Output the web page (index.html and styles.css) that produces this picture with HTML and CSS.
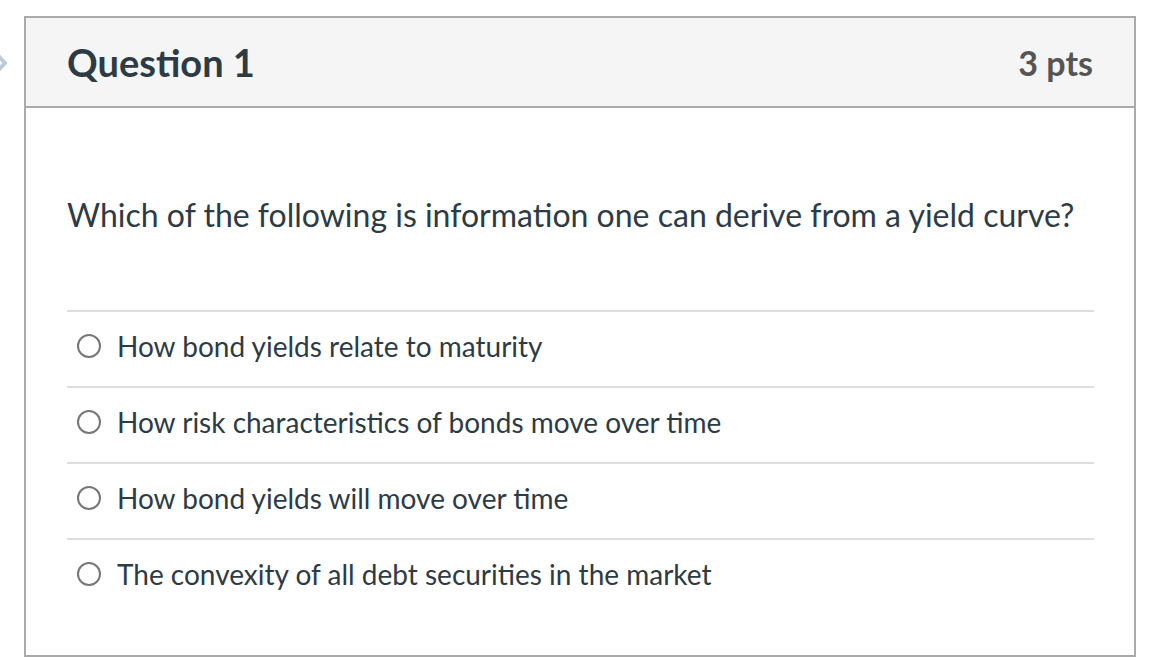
FILE: index.html
```html
<!DOCTYPE html>
<html>
<head>
<meta charset="utf-8">
<link rel="stylesheet" href="styles.css">
</head>
<body>
<div class="page">
  <svg class="flag" width="12" height="44" viewBox="0 0 12 44">
    <path d="M-12 4 L5 22 L-12 40" fill="none" stroke="#bccbd7" stroke-width="4" stroke-linejoin="round"/>
  </svg>
  <div class="card">
    <div class="header">
      <h2 class="title">Question 1</h2>
      <div class="pts">3 pts</div>
    </div>
    <div class="body">
      <p class="question">Which of the following is information one can derive from a yield curve?</p>
      <div class="answers">
        <label class="answer"><span class="radio"></span><span class="atext">How bond yields relate to maturity</span></label>
        <label class="answer"><span class="radio"></span><span class="atext">How risk characteristics of bonds move over time</span></label>
        <label class="answer"><span class="radio"></span><span class="atext">How bond yields will move over time</span></label>
        <label class="answer"><span class="radio"></span><span class="atext">The convexity of all debt securities in the market</span></label>
      </div>
    </div>
  </div>
</div>
</body>
</html>
```
FILE: styles.css
```css
* { box-sizing: border-box; }
html, body { margin: 0; padding: 0; background: #fff; }
body { font-family: Lato, "Noto Sans", sans-serif; color: #2d3b45; }
.page { position: relative; padding: 16px 0 0 24px; width: 1156px; height: 658px; }
.flag { position: absolute; left: 0; top: 41px; }
.card {
  width: 1112px;
  height: 641px;
  border: 2px solid #aaaaaa;
  display: flex;
  flex-direction: column;
}
.header {
  height: 90px;
  background: #f5f5f5;
  border-bottom: 2px solid #aaaaaa;
  display: flex;
  align-items: center;
  justify-content: space-between;
  padding: 0 41px 0 41px;
}
.title { margin: 0; font-size: 38px; font-weight: 700; color: #2d3b45; }
.pts { font-size: 34px; font-weight: 700; color: #555; }
.body { padding: 0 40px 0 41px; }
.question { margin: 0; padding-top: 88px; height: 202px; font-size: 32px; line-height: 38px; }
.answers { display: flex; flex-direction: column; }
.answer {
  height: 76px;
  border-top: 2px solid #dddddd;
  display: flex;
  align-items: center;
  padding-left: 10px;
  padding-bottom: 6px;
}
.radio {
  width: 24px; height: 24px;
  border: 2px solid #777;
  border-radius: 50%;
  margin-right: 16px;
  flex: none;
}
.atext { font-size: 28px; line-height: 34px; }
```
